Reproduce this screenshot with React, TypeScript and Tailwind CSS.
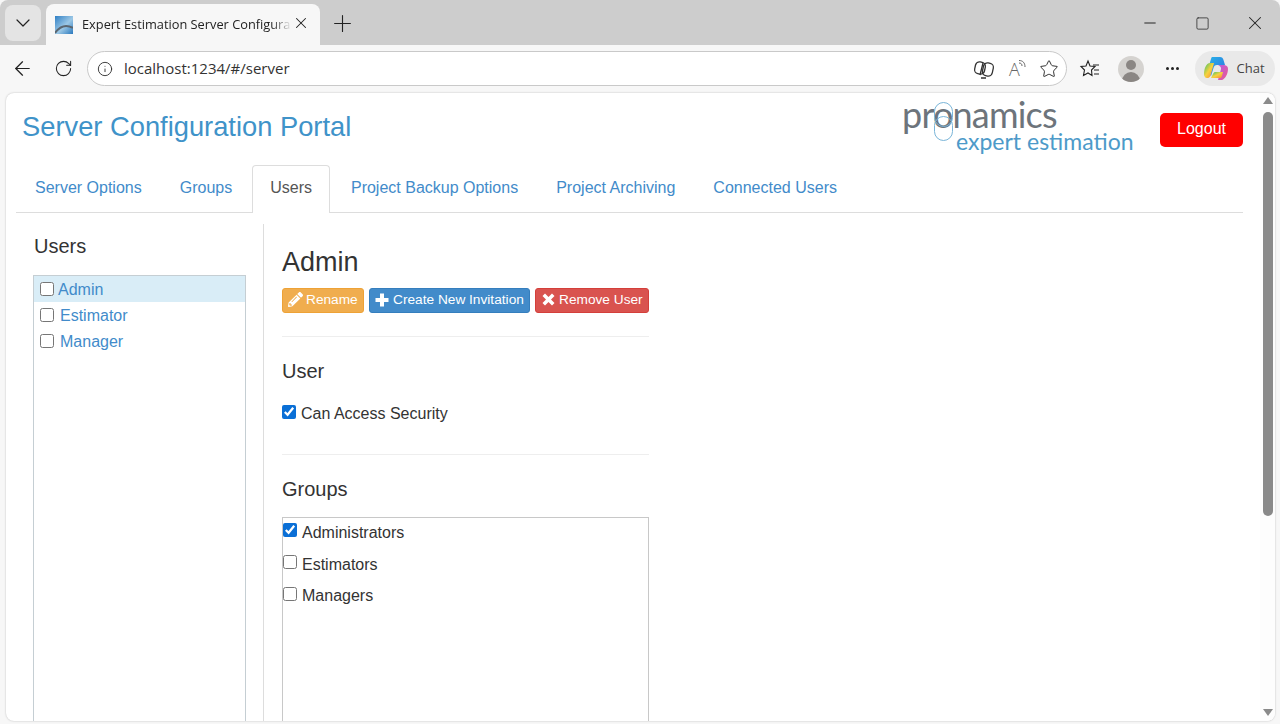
import { ArrowLeft, ChevronDown, Info, Minus, Plus, RotateCw, Square, Star, X } from "lucide-react";
import { FaPencilAlt } from "react-icons/fa";

const tabs = ["Server Options", "Groups", "Users", "Project Backup Options", "Project Archiving", "Connected Users"];

const Favicon = () => (
  <svg width="18" height="18" viewBox="0 0 18 18" className="shrink-0">
    <defs>
      <linearGradient id="fav" x1="0" y1="0" x2="1" y2="1">
        <stop offset="0" stopColor="#2f7fc4" />
        <stop offset="0.55" stopColor="#9cc8e6" />
        <stop offset="1" stopColor="#2a78bd" />
      </linearGradient>
    </defs>
    <rect width="18" height="18" fill="url(#fav)" />
    <path d="M0 17 C5 10 11 8 18 12" fill="none" stroke="#5b6670" strokeWidth="2" />
  </svg>
);

const CopilotIcon = () => (
  <svg width="26" height="26" viewBox="0 0 26 26">
    <defs>
      <linearGradient id="cpA" x1="0" y1="0" x2="1" y2="1">
        <stop offset="0" stopColor="#27b6e8" />
        <stop offset="1" stopColor="#2f6fe0" />
      </linearGradient>
      <linearGradient id="cpB" x1="0" y1="0" x2="1" y2="1">
        <stop offset="0" stopColor="#35c26b" />
        <stop offset="0.5" stopColor="#f7d23e" />
        <stop offset="1" stopColor="#f7803a" />
      </linearGradient>
      <linearGradient id="cpC" x1="0" y1="0" x2="1" y2="1">
        <stop offset="0" stopColor="#b45be0" />
        <stop offset="1" stopColor="#f05a8c" />
      </linearGradient>
    </defs>
    <path d="M9 1 H17 C19 1 20 2 20.5 4 L22 9 L14 9 C12 9 11 10 10.5 12 L8 20 L4 16 L8 3 C8.3 2 8.6 1 9 1Z" fill="url(#cpA)" />
    <path d="M7 7 L11 7 L8 18 C7.5 20 7 22 4 22 C2 22 1 20 1 18 C1 13 3 7 7 7Z" fill="url(#cpB)" />
    <path d="M15 9 H20 C23 9 25 10 25 13 C25 18 22 23 19 24 H15 L18 13 C18.4 11 17 10 15 9Z" fill="url(#cpC)" />
    <path d="M8 22 H17 C18 22 18.5 21.5 19 20 L20 16 L12 16 C11 16 10.5 17 10 18 Z" fill="url(#cpB)" />
  </svg>
);

const Browser = () => (
  <div className="shrink-0">
    <div className="flex h-[45px] items-end rounded-t-lg bg-[#cdcdcd] pl-[5px]">
      <div className="mb-[4px] flex h-[36px] w-[36px] items-center justify-center rounded-lg bg-[#e4e4e4]">
        <ChevronDown size={24} strokeWidth={1.2} className="text-[#222]" />
      </div>
      <div className="ml-[5px] flex h-[41px] w-[274px] items-center rounded-t-lg bg-[#f7f7f7] pl-[9px]">
        <Favicon />
        <span className="ml-[9px] w-[210px] overflow-hidden text-[12.8px] whitespace-nowrap text-[#222] [font-family:'Open_Sans',sans-serif] [mask-image:linear-gradient(to_right,black_90%,transparent)]">
          Expert Estimation Server Configura
        </span>
        <X size={18} strokeWidth={1.4} className="-mt-[3px] text-[#222]" />
      </div>
      <div className="mb-[12px] ml-[12px] flex h-[20px] w-[20px] items-center justify-center">
        <Plus size={27} strokeWidth={1} className="shrink-0 text-[#222]" />
      </div>
      <div className="mb-[11px] ml-auto flex items-center pr-[14px]">
        <Minus size={18} strokeWidth={1.3} className="text-[#222]" />
        <Square size={15} strokeWidth={1.2} className="ml-[36px] text-[#222]" />
        <X size={22} strokeWidth={1.1} className="ml-[34px] text-[#222]" />
      </div>
    </div>
    <div className="flex h-[47px] items-center bg-[#f7f7f7] pl-[11px]">
      <ArrowLeft size={23} strokeWidth={1.3} className="text-[#222]" />
      <RotateCw size={19} strokeWidth={1.3} className="ml-[20px] text-[#222]" />
      <div className="ml-[14px] flex h-[35px] w-[980px] items-center rounded-full border border-[#c9c9c9] bg-white pl-[9px]">
        <Info size={16} strokeWidth={1.4} className="text-[#333]" />
        <span className="ml-[11px] text-[15px] text-[#333] [font-family:'Open_Sans',sans-serif]">localhost:1234/#/server</span>
        <div className="ml-auto flex items-center gap-[11px] pr-[7px]">
          <svg width="22" height="22" viewBox="0 0 22 22" fill="none" stroke="#333" strokeWidth="1.3">
            <rect x="2" y="4" width="10" height="12" rx="4" transform="rotate(12 7 10)" />
            <rect x="10" y="5" width="10" height="13" rx="4" transform="rotate(12 15 11)" />
            <path d="M8 20 L13 20 M10 5 L7 17" />
          </svg>
          <div className="relative h-[22px] w-[22px]">
            <span className="absolute -top-[2px] left-[3px] text-[18px] font-light text-[#666] [font-family:'Open_Sans',sans-serif]">A</span>
            <svg width="10" height="10" viewBox="0 0 10 10" fill="none" stroke="#666" strokeWidth="1" className="absolute top-[2px] right-0">
              <path d="M1 3 C3 3 4 4 4 6 M1 0.5 C5 0.5 7 3 7 7" />
            </svg>
          </div>
          <Star size={20} strokeWidth={1.2} className="text-[#333]" />
        </div>
      </div>
      <svg width="22" height="22" viewBox="0 0 22 22" fill="none" stroke="#222" strokeWidth="1.1" className="ml-[12px]">
        <path d="M9 3 L11 8 L16 8.5 L12.5 12 L13 17.5 L9 15 L4.5 17.5 L5.5 12 L2 8.5 L7 8 Z" />
        <path d="M14 7 H20 M15 12 H20 M15 16 H20" />
      </svg>
      <div className="ml-[17px] flex h-[26px] w-[26px] items-end justify-center overflow-hidden rounded-full bg-[#d5d3d0]">
        <div className="relative h-[22px] w-[18px]">
          <div className="absolute top-0 left-[4px] h-[10px] w-[10px] rounded-full bg-[#8a8683]" />
          <div className="absolute top-[12px] left-0 h-[10px] w-[18px] rounded-t-full bg-[#8a8683]" />
        </div>
      </div>
      <div className="ml-[22px] flex gap-[2.5px]">
        <div className="h-[2.5px] w-[2.5px] rounded-full bg-[#222]" />
        <div className="h-[2.5px] w-[2.5px] rounded-full bg-[#222]" />
        <div className="h-[2.5px] w-[2.5px] rounded-full bg-[#222]" />
      </div>
      <div className="ml-[16px] flex h-[35px] w-[80px] items-center rounded-full bg-[#e9e9e9] pl-[8px]">
        <CopilotIcon />
        <span className="ml-[8px] text-[13px] text-[#444] [font-family:'Open_Sans',sans-serif]">Chat</span>
      </div>
    </div>
  </div>
);

const Logo = () => (
  <div className="relative h-[56px] w-[232px] whitespace-nowrap [font-family:Lato,sans-serif]">
    <span className="absolute -top-[1px] left-0 text-[36px] leading-[24px] tracking-[-0.8px] text-[#6d747b]">pronamics</span>
    <span className="absolute top-[29px] left-[54px] text-[23px] leading-[18px] text-[#4d9ac9]">expert estimation</span>
    <div className="absolute -top-[1px] left-[32px] h-[25px] w-[19px] rounded-full border border-[#7ab5d8]" />
    <div className="absolute top-[13px] left-[32px] h-[25px] w-[19px] rounded-full border border-[#7ab5d8]" />
  </div>
);

const Check = ({ checked }: { checked?: boolean }) => (
  <input type="checkbox" defaultChecked={checked} className="m-0 h-[14px] w-[14px] shrink-0 accent-[#0a6fd6]" />
);

const ListRow = ({ label, active, gap }: { label: string; active?: boolean; gap: string }) => (
  <div className={active ? "flex h-[26px] items-center bg-[#d9edf7] pt-[2px] pl-[6px]" : "flex h-[26px] items-center pt-[2px] pl-[6px]"}>
    <div className="-mt-[3px] flex">
      <Check />
    </div>
    <a className={`${gap} text-[16px] text-[#428bca]`}>{label}</a>
  </div>
);

const GroupRow = ({ label, checked, h, lift }: { label: string; checked?: boolean; h: string; lift: string }) => (
  <div className={`${h} flex items-center`}>
    <div className={`${lift} flex`}>
      <Check checked={checked} />
    </div>
    <span className="ml-[5px] text-[16px] text-[#333]">{label}</span>
  </div>
);

const Portal = () => (
  <div className="mr-[5px] ml-[6px] flex h-[628px] overflow-hidden rounded-lg bg-white shadow-[0_0_2px_rgba(0,0,0,0.25)] [font-family:'Liberation_Sans',Arial,sans-serif]">
    <div className="min-w-0 flex-1 pt-[20px] pr-[17px] pl-[10px]">
      <div className="flex h-[52px] items-start">
        <h1 className="pl-[6px] text-[27.3px] leading-[28px] text-[#3f93c9]">Server Configuration Portal</h1>
        <div className="-mt-[10px] ml-auto">
          <Logo />
        </div>
        <button className="ml-[26px] h-[34px] w-[83px] rounded-[5px] bg-[#ff0000] pb-[2px] text-[16px] text-white">Logout</button>
      </div>

      <div className="flex h-[48px] items-end border-b border-[#ddd]">
        {tabs.map((t) =>
          t === "Users" ? (
            <a key={t} className="-mb-px mr-[2px] ml-[1px] flex h-[48px] items-center rounded-t border border-b-0 border-[#ddd] bg-white px-[17px] pb-[4px] text-[16px] text-[#555]">
              {t}
            </a>
          ) : (
            <a key={t} className="flex h-[48px] items-center px-[19px] text-[16px] text-[#428bca]">
              {t}
            </a>
          ),
        )}
      </div>

      <div className="mt-[11px] flex">
        <div className="h-[500px] w-[248px] shrink-0 border-r border-[#ddd] pl-[17px]">
          <h3 className="mt-[11px] ml-[1px] text-[20px] leading-[22px] text-[#333]">Users</h3>
          <div className="mt-[18px] h-[460px] w-[213px] border border-[#c5ced3]">
            <ListRow label="Admin" active gap="ml-[4px]" />
            <ListRow label="Estimator" gap="ml-[6px]" />
            <ListRow label="Manager" gap="ml-[6px]" />
          </div>
        </div>

        <div className="ml-[18px] w-[367px]">
          <h2 className="mt-[23px] text-[27px] leading-[30px] text-[#333]">Admin</h2>
          <div className="mt-[11px] flex gap-[5px] text-[13.7px] text-white">
            <button className="flex h-[25px] w-[82px] items-center gap-[3px] rounded-[3px] border border-[#eea236] bg-[#f0ad4e] pl-[5px]">
              <FaPencilAlt size={15} className="-mt-[2px]" /> Rename
            </button>
            <button className="flex h-[25px] w-[161px] items-center gap-[4px] rounded-[3px] border border-[#357ebd] bg-[#428bca] pl-[5px]">
              <svg width="14" height="14" viewBox="0 0 14 14" fill="currentColor" className="-mt-[2px]">
                <path d="M5 0.5 H9 V5 H13.5 V9 H9 V13.5 H5 V9 H0.5 V5 H5 Z" />
              </svg>
              Create New Invitation
            </button>
            <button className="flex h-[25px] w-[114px] items-center gap-[4px] rounded-[3px] border border-[#d43f3a] bg-[#d9534f] pl-[6px]">
              <svg width="13" height="13" viewBox="0 0 13 13" fill="currentColor" className="-mt-[2px]">
                <path d="M3 0.5 L6.5 4 L10 0.5 L12.5 3 L9 6.5 L12.5 10 L10 12.5 L6.5 9 L3 12.5 L0.5 10 L4 6.5 L0.5 3 Z" />
              </svg>
              Remove User
            </button>
          </div>
          <hr className="mt-[23px] border-[#eee]" />
          <h3 className="mt-[23px] text-[20px] leading-[22px] text-[#333]">User</h3>
          <div className="mt-[20px] flex h-[24px] items-center">
            <div className="-mt-[4px] flex">
              <Check checked />
            </div>
            <span className="ml-[5px] text-[16px] text-[#333]">Can Access Security</span>
          </div>
          <hr className="mt-[28px] border-[#eee]" />
          <h3 className="mt-[23px] text-[20px] leading-[22px] text-[#333]">Groups</h3>
          <div className="mt-[17px] h-[300px] border border-[#c8c8c8] pt-[2px]">
            <GroupRow label="Administrators" checked h="h-[26px]" lift="-mt-[7px]" />
            <GroupRow label="Estimators" h="h-[37px]" lift="-mt-[5px]" />
            <GroupRow label="Managers" h="h-[26px]" lift="-mt-[5px]" />
          </div>
        </div>
      </div>
    </div>

    <div className="flex w-[15px] shrink-0 flex-col items-center bg-[#fdfdfd] pt-[4px] pb-[5px]">
      <div className="h-0 w-0 border-x-[5px] border-b-[7px] border-x-transparent border-b-[#8a8a8a]" />
      <div className="mt-[8px] h-[404px] w-[10px] rounded-full bg-[#8a8a8a]" />
      <div className="mt-auto h-0 w-0 border-x-[5px] border-t-[7px] border-x-transparent border-t-[#8a8a8a]" />
    </div>
  </div>
);

export default function App() {
  return (
    <div className="h-[724px] w-[1280px] overflow-hidden bg-[#f7f7f7]">
      <Browser />
      <div className="pt-[1px]">
        <Portal />
      </div>
    </div>
  );
}
